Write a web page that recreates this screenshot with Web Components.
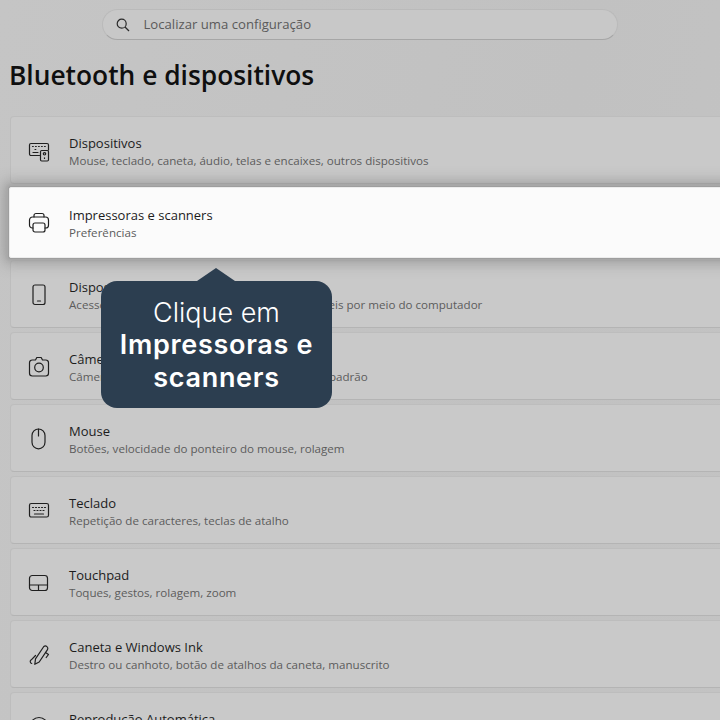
<!DOCTYPE html>
<html lang="pt-BR">
<head>
<meta charset="utf-8">
<title>Bluetooth e dispositivos</title>
<style>
  html, body { margin: 0; height: 100%; overflow: hidden; background: #c3c3c3; }
</style>
</head>
<body>
<settings-page>
  <search-box slot="search">Localizar uma configuração</search-box>
  <page-title slot="title">Bluetooth e dispositivos</page-title>

  <settings-row icon="devices" label="Dispositivos">Mouse, teclado, caneta, áudio, telas e encaixes, outros dispositivos</settings-row>
  <settings-row icon="printer" label="Impressoras e scanners" active>Preferências</settings-row>
  <settings-row icon="phone" label="Dispositivos móveis">Acesse instantaneamente seus dispositivos móveis por meio do computador</settings-row>
  <settings-row icon="camera" label="Câmeras">Câmeras conectadas, configurações de imagem padrão</settings-row>
  <settings-row icon="mouse" label="Mouse">Botões, velocidade do ponteiro do mouse, rolagem</settings-row>
  <settings-row icon="keyboard" label="Teclado">Repetição de caracteres, teclas de atalho</settings-row>
  <settings-row icon="touchpad" label="Touchpad">Toques, gestos, rolagem, zoom</settings-row>
  <settings-row icon="pen" label="Caneta e Windows Ink">Destro ou canhoto, botão de atalhos da caneta, manuscrito</settings-row>
  <settings-row icon="autoplay" label="Reprodução Automática">Padrões para unidades e cartões de memória</settings-row>

  <tip-callout slot="overlay">Clique em <b>Impressoras e scanners</b></tip-callout>
</settings-page>

<script>
const ICONS = {
  devices: `<path d="M10.500 15.500H2A1.500 1.500 0 0 1 .5 14V5A1.500 1.500 0 0 1 2 3.500h16A1.500 1.500 0 0 1 19.500 5v5"/><path d="M3.500 6.500h.8M6.500 6.500h.8M9.500 6.500h.8M12.500 6.500h.8M15.500 6.500h.8M6 9.500h.8M4 12.500h5"/><rect x="11.500" y="10.500" width="8" height="10.500" rx="1.200"/><circle cx="15.500" cy="13.800" r="1.200"/><path d="M15.500 17.800v.6"/>`,
  printer: `<path d="M5 5V3.500A2 2 0 0 1 7 1.500h6a2 2 0 0 1 2 2V5"/><path d="M4 16H3.300A2.800 2.800 0 0 1 .5 13.200V8A3 3 0 0 1 3.500 5h13a3 3 0 0 1 3 3v5.200a2.800 2.800 0 0 1-2.800 2.800H16"/><rect x="4" y="11" width="12" height="9" rx="2"/>`,
  phone: `<rect x="4" y="1" width="12" height="19.500" rx="2"/><path d="M8.500 17h3"/>`,
  camera: `<path d="M6.500 4 7.800 1.500h4.400L13.500 4h3.300a2.700 2.700 0 0 1 2.700 2.700v10.600a2.700 2.700 0 0 1-2.700 2.700H3.200A2.700 2.700 0 0 1 .5 17.300V6.700A2.700 2.700 0 0 1 3.200 4z"/><circle cx="10" cy="11.500" r="4.300"/>`,
  mouse: `<path d="M9.500 1A6.500 6.500 0 0 0 3 7.500v6.800a6.500 6.500 0 0 0 13 0V7.500A6.500 6.500 0 0 0 9.500 1z"/><path d="M9.500 1v7"/>`,
  keyboard: `<rect x=".5" y="3.500" width="19" height="13.500" rx="1.800"/><path d="M3.500 7.500h1M6.500 7.500h1M9.500 7.500h1M12.500 7.500h1M15.500 7.500h1M5 10.500h1M8 10.500h1M11 10.500h1M14 10.500h1M5.500 14h9"/>`,
  touchpad: `<rect x=".5" y="3.500" width="18" height="15" rx="2.800"/><path d="M.5 13h18M9.500 13v5.500"/>`,
  pen: `<path d="M14.800 2.500 6.500 14.800 5.800 20.300 10.200 18l8.300-12.300a2.500 2.500 0 0 0-3.700-3.200z"/><path d="M6.500 11.500 2.300 15.800a2 2 0 0 0 .4 3.700M16.500 8.500l3 2-2.300 3"/>`,
  autoplay: `<circle cx="10" cy="10.500" r="9"/><path d="M8 7 14 10.500 8 14z"/>`
};

class SettingsPage extends HTMLElement {
  constructor() {
    super();
    this.attachShadow({ mode: "open" });
    this.shadowRoot.innerHTML = `
      <style>
        :host {
          display: block;
          position: relative;
          width: 720px;
          height: 720px;
          overflow: hidden;
          background: linear-gradient(100deg, #c5c5c5, #c1c1c1 70%, #c3c3c3);
          font-family: "Open Sans", "Noto Sans", sans-serif;
        }
        .top { display: flex; justify-content: center; padding: 9px 0 0; margin-right: 1px; }
        .list { display: flex; flex-direction: column; gap: 4px; width: 740px; margin-left: 10px; }
      </style>
      <div class="top"><slot name="search"></slot></div>
      <slot name="title"></slot>
      <div class="list"><slot></slot></div>
      <slot name="overlay"></slot>
    `;
  }
}

class SearchBox extends HTMLElement {
  constructor() {
    super();
    this.attachShadow({ mode: "open" });
    this.shadowRoot.innerHTML = `
      <style>
        :host {
          display: flex;
          align-items: center;
          box-sizing: border-box;
          width: 516px;
          height: 31px;
          padding-left: 13px;
          gap: 14px;
          background: #c8c8c8;
          border: 1px solid #bababa;
          border-bottom-color: #a6a6a6;
          border-radius: 15.5px;
          color: #5a5a5a;
          font-size: 13.150px;
        }
        svg { width: 14px; height: 14px; fill: none; stroke: #2a2a2a; stroke-width: 1.2; }
        span { margin-bottom: 2px; }
      </style>
      <svg viewBox="0 0 14 14"><circle cx="5.700" cy="5.700" r="4.500"/><path d="M9 9l4 4"/></svg>
      <span><slot></slot></span>
    `;
  }
}

class PageTitle extends HTMLElement {
  constructor() {
    super();
    this.attachShadow({ mode: "open" });
    this.shadowRoot.innerHTML = `
      <style>
        :host {
          display: block;
          height: 76px;
          padding-left: 9px;
          color: #0f0f0f;
          font-size: 26.350px;
          font-weight: 600;
          line-height: 70px;
          white-space: nowrap;
        }
      </style>
      <slot></slot>
    `;
  }
}

class SettingsRow extends HTMLElement {
  constructor() {
    super();
    this.attachShadow({ mode: "open" });
    const icon = ICONS[this.getAttribute("icon")] || "";
    this.shadowRoot.innerHTML = `
      <style>
        :host {
          --row-bg: #c9c9c9;
          display: flex;
          align-items: center;
          box-sizing: border-box;
          height: 68px;
          flex: none;
          background: var(--row-bg);
          border: 1px solid #bdbdbd;
          border-bottom-color: #b4b4b4;
          border-radius: 4px;
          white-space: nowrap;
        }
        :host([active]) {
          --row-bg: #fbfbfb;
          position: relative;
          z-index: 1;
          border: 1px solid #ececec;
          border-width: 1.5px 1px;
          border-radius: 2px;
          margin: -1px 0 -2px -1px;
          padding-left: 1px;
          height: 71px;
          box-shadow: 0 0 0 1px #9e9e9e, 0 0 3px 3px #a8a8a8, 0 0 14px 6px rgba(90, 90, 90, .35);
        }
        svg {
          width: 20px; height: 20px; flex: none;
          margin: 0 20px 0 18px;
          overflow: visible;
          fill: none; stroke: #1f1f1f; stroke-width: 1.2; stroke-linecap: round; stroke-linejoin: round;
        }
        :host([active]) svg { margin-bottom: 2px; }
        .text { padding-top: 4px; }
        :host([active]) .text { padding-top: 3px; }
        .name { color: #1c1c1c; font-size: 13px; line-height: 17px; }
        .desc { color: #5c5c5c; font-size: 11.600px; line-height: 17px; }
      </style>
      <svg viewBox="0 0 20 20">${icon}</svg>
      <div class="text">
        <div class="name">${this.getAttribute("label")}</div>
        <div class="desc"><slot></slot></div>
      </div>
    `;
  }
}

class TipCallout extends HTMLElement {
  constructor() {
    super();
    this.attachShadow({ mode: "open" });
    this.shadowRoot.innerHTML = `
      <style>
        :host {
          display: block;
          position: absolute;
          z-index: 2;
          left: 101px;
          top: 281px;
          box-sizing: border-box;
          width: 231px;
          height: 127px;
          padding: 16px 10px;
          background: #2c3e50;
          border-radius: 16px;
          color: #fff;
          font-family: Inter, "Liberation Sans", sans-serif;
          font-size: 27px;
          font-weight: 350;
          line-height: 32.300px;
          text-align: center;
        }
        :host::before {
          content: "";
          position: absolute;
          left: 96px;
          top: -13px;
          width: 38px;
          height: 13px;
          background: #2c3e50;
          clip-path: polygon(50% 0, 100% 100%, 0 100%);
        }
        ::slotted(b) { font-weight: 600; letter-spacing: .7px; }
      </style>
      <slot></slot>
    `;
  }
}

customElements.define("settings-page", SettingsPage);
customElements.define("search-box", SearchBox);
customElements.define("page-title", PageTitle);
customElements.define("settings-row", SettingsRow);
customElements.define("tip-callout", TipCallout);
</script>
</body>
</html>
